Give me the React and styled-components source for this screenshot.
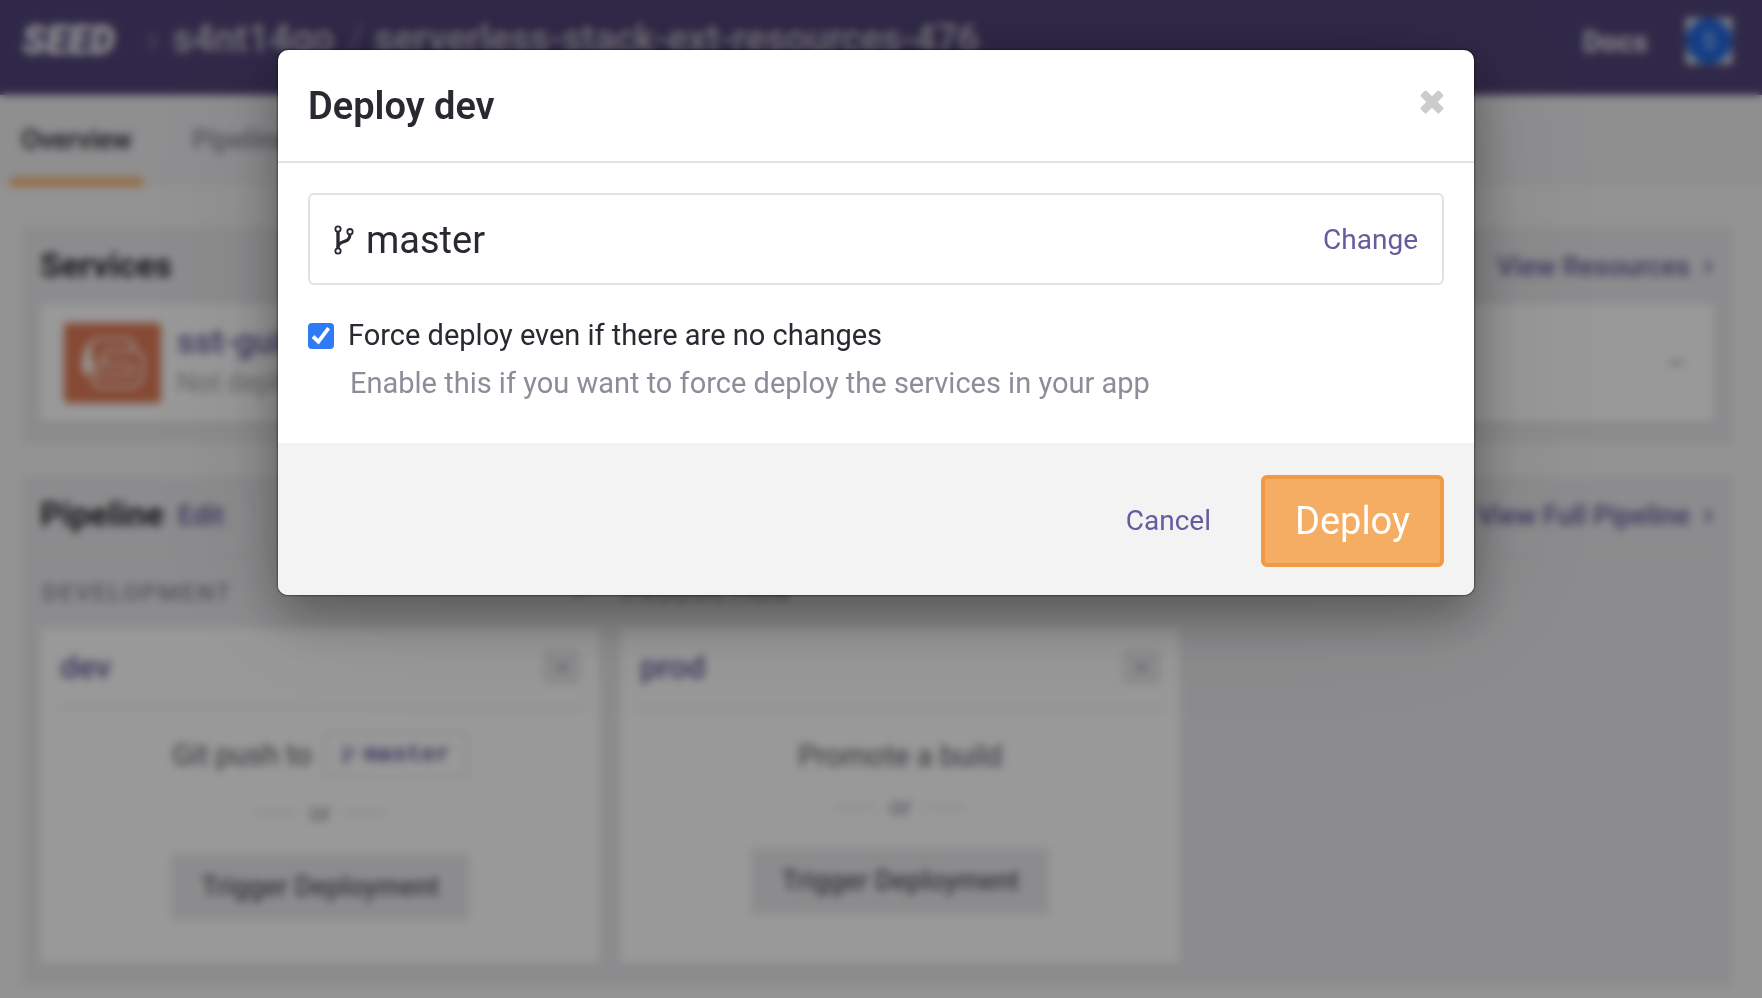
import React, { useState } from "react";
import styled, { createGlobalStyle, css } from "styled-components";

const color = {
  ink: "#2a2830",
  muted: "#8f8c99",
  grey: "#5f5d68",
  purple: "#675a9e",
  header: "#504478",
  page: "#f5f5f5",
  panel: "#eaeaed",
  line: "#e2e2e2",
  orange: "#f5ad63",
  orangeDark: "#f09a45",
};

const GlobalStyle = createGlobalStyle`
  *, *::before, *::after { box-sizing: border-box; }
  html, body { margin: 0; background: ${color.page}; }
  body {
    font-family: Roboto, "Liberation Sans", sans-serif;
    font-size: 29px;
    color: ${color.ink};
  }
  a { color: inherit; text-decoration: none; }
  h1, h2, h3, p { margin: 0; font-weight: 500; }
  button { font: inherit; color: inherit; border: 0; cursor: pointer; }
`;

/* ---------- page ---------- */

const Page = styled.div`
  min-height: 100vh;
  background: ${color.page};
`;

const TopBar = styled.header`
  display: flex;
  align-items: center;
  height: 95px;
  padding: 0 30px 14px 22px;
  background: ${color.header};
  color: #c9c7d0;
`;

const Logo = styled.a`
  font-size: 40px;
  line-height: 44px;
  font-weight: 900;
  font-style: italic;
  color: #f4f4f6;
`;

const Crumbs = styled.nav`
  display: flex;
  align-items: center;
  flex: 1;
  gap: 14px;
  margin-left: 32px;
  padding-bottom: 4px;
  font-size: 38px;
  line-height: 44px;
  font-weight: 500;
`;

const CrumbMark = styled.span`
  width: 12px;
  color: #8a80ab;
  font-weight: 400;
`;

const DocsLink = styled.a`
  margin-right: 38px;
  padding-top: 2px;
  font-weight: 700;
  color: #e4e3e8;
`;

const Avatar = styled.span`
  display: grid;
  width: 46px;
  height: 46px;
  background: #e8e8ea;
`;

const AvatarDisc = styled.span`
  display: grid;
  place-items: center;
  border-radius: 50%;
  background: #1f66dc;
  color: #bdd4ff;
  font-size: 24px;
`;

const Tabs = styled.nav`
  display: flex;
  gap: 38px;
  height: 91px;
  padding: 0 10px;
  background: #eeeef1;
`;

const Tab = styled.a`
  display: flex;
  align-items: center;
  padding: 6px 11px 0;
  border-bottom: 8px solid ${(p) => (p.$active ? color.orange : "transparent")};
  font-size: 27px;
  font-weight: 500;
  color: ${(p) => (p.$active ? color.ink : color.muted)};
`;

const Content = styled.main`
  display: flex;
  flex-direction: column;
  gap: 32px;
  padding: 41px 30px 12px 22px;
`;

const Panel = styled.section`
  padding: 18px 18px 22px;
  background: ${color.panel};
`;

const PanelHead = styled.div`
  display: flex;
  align-items: center;
  gap: 14px;
  height: 40px;
  margin-bottom: 19px;
`;

const PanelTitle = styled.h2`
  font-size: 34px;
  font-weight: 700;
`;

const PanelLink = styled.a`
  display: flex;
  align-items: center;
  gap: 12px;
  margin-left: ${(p) => (p.$end ? "auto" : "0")};
  padding-top: 4px;
  font-size: 27px;
  font-weight: 500;
  color: ${color.purple};
`;

const cardSurface = css`
  background: #ffffff;
  border-radius: 4px;
  box-shadow: 0 2px 4px rgba(0, 0, 0, 0.08);
`;

const ServiceCard = styled.article`
  ${cardSurface}
  display: flex;
  align-items: center;
  gap: 16px;
  height: 118px;
  padding: 0 28px 0 24px;
`;

const ServiceIcon = styled.span`
  display: grid;
  place-items: center;
  width: 97px;
  height: 80px;
  border-radius: 4px;
  background: #e07a56;
`;

const ServiceText = styled.div`
  flex: 1;
  padding-bottom: 4px;
`;

const ServiceName = styled.h3`
  font-size: 34px;
  line-height: 44px;
  color: ${color.purple};
`;

const ServiceStatus = styled.p`
  font-size: 27px;
  line-height: 40px;
  font-weight: 400;
  color: #aaa8b2;
`;

const Dash = styled.span`
  color: ${color.muted};
`;

const Rule = styled.hr`
  margin: 0;
  border: 0;
  border-top: 2px solid #e4e4e6;
`;

const Stages = styled.div`
  display: grid;
  grid-template-columns: 12fr 12fr 11fr;
  column-gap: 20px;
  padding-top: 20px;
`;

const Stage = styled.div`
  display: flex;
  flex-direction: column;
  gap: 17px;
`;

const StageLabel = styled.h3`
  display: flex;
  align-items: center;
  justify-content: space-between;
  padding: 0 16px 0 2px;
  font-size: 24px;
  line-height: 36px;
  letter-spacing: 2px;
  text-transform: uppercase;
  color: ${color.muted};
`;

const StageCard = styled.article`
  ${cardSurface}
  display: flex;
  flex-direction: column;
  height: 336px;
  padding: 0 20px;
`;

const StageHead = styled.div`
  display: flex;
  align-items: center;
  justify-content: space-between;
  height: 80px;
  border-bottom: 2px solid #e6e6e6;
  font-size: 32px;
  font-weight: 500;
  color: ${color.purple};
`;

const MenuButton = styled.button`
  display: grid;
  place-items: center;
  width: 37px;
  height: 34px;
  padding: 0;
  background: ${color.panel};
  color: ${color.muted};
`;

const StageBody = styled.div`
  display: flex;
  flex-direction: column;
  align-items: center;
  gap: 21px;
  padding-top: ${(p) => (p.$textOnly ? "32px" : "24px")};
`;

const StageAction = styled.p`
  display: flex;
  align-items: center;
  gap: 12px;
  font-weight: 400;
  line-height: 32px;
  color: ${color.grey};
`;

const BranchTag = styled.span`
  display: flex;
  align-items: center;
  gap: 8px;
  height: 46px;
  padding: 0 16px;
  border: 2px solid #e6e6e6;
  border-radius: 4px;
  font-family: "Liberation Mono", monospace;
  font-size: 24px;
  font-weight: 700;
  color: ${color.purple};
`;

const OrRow = styled.div`
  display: flex;
  align-items: center;
  gap: 14px;
  margin-bottom: 6px;
  font-size: 24px;
  line-height: 28px;
  color: ${color.muted};

  &::before,
  &::after {
    content: "";
    width: 42px;
    border-top: 2px solid #dcdcdc;
  }
`;

const TriggerButton = styled.button`
  width: 298px;
  height: 66px;
  padding: 0;
  background: ${color.panel};
  font-size: 27px;
  font-weight: 500;
  color: ${color.grey};
`;

/* ---------- dialog ---------- */

const Overlay = styled.div`
  position: fixed;
  inset: 0;
  display: flex;
  justify-content: center;
  align-items: flex-start;
  padding: 50px 288px 50px 278px;
  background: rgba(0, 0, 0, 0.4);
  backdrop-filter: blur(4px);
`;

const Modal = styled.section`
  flex: 1;
  overflow: hidden;
  border-radius: 10px;
  background: #ffffff;
  font-weight: 450;
  box-shadow:
    0 0 2px 1px rgba(0, 0, 0, 0.4),
    0 20px 50px rgba(0, 0, 0, 0.35),
    0 4px 160px rgba(0, 0, 0, 0.12);
`;

const ModalHead = styled.div`
  display: flex;
  align-items: center;
  justify-content: space-between;
  height: 113px;
  padding: 0 30px;
  border-bottom: 2px solid ${color.line};
`;

const ModalTitle = styled.h1`
  font-size: 38px;
  line-height: 44px;
  font-weight: 600;
`;

const CloseButton = styled.button`
  display: grid;
  padding: 0 0 8px;
  background: none;
`;

const ModalBody = styled.div`
  padding: 30px 30px 40px;
`;

const BranchBox = styled.div`
  display: flex;
  align-items: center;
  gap: 12px;
  height: 92px;
  padding: 2px 24px 0;
  border: 2px solid ${color.line};
  border-radius: 6px;
`;

const BranchName = styled.span`
  flex: 1;
  font-size: 38px;
`;

const TextButton = styled.button`
  padding: 0 0 2px;
  background: none;
  font-size: 28px;
  color: ${color.purple};
`;

const CheckRow = styled.label`
  display: flex;
  align-items: center;
  gap: 14px;
  margin-top: 30px;
  line-height: 40px;
`;

const CheckBox = styled.input`
  appearance: none;
  width: 26px;
  height: 26px;
  margin: 2px 0 0;
  border: 2px solid #9a9a9a;
  border-radius: 4px;
  background: #ffffff;

  &:checked {
    border: 0;
    background: #2f7bf6
      url("data:image/svg+xml,%3Csvg xmlns='http://www.w3.org/2000/svg' viewBox='0 0 26 26'%3E%3Cpath d='M5 13.5 10.4 18.6 20.6 5.2' fill='none' stroke='white' stroke-width='3.8'/%3E%3C/svg%3E");
  }
`;

const Hint = styled.p`
  padding: 8px 0 0 42px;
  line-height: 40px;
  font-weight: inherit;
  color: ${color.muted};
`;

const ModalFoot = styled.div`
  display: flex;
  align-items: center;
  justify-content: flex-end;
  gap: 50px;
  height: 152px;
  padding: 4px 30px 0;
  background: #f3f3f3;
`;

const DeployButton = styled.button`
  height: 92px;
  padding: 0 30px;
  border: 4px solid ${color.orangeDark};
  border-radius: 6px;
  background: ${color.orange};
  font-size: 38px;
  color: #ffffff;
`;

/* ---------- drawings ---------- */

function BranchIcon({ width, height }) {
  return (
    <svg width={width} height={height} viewBox="0 0 60 90" fill="none" stroke="currentColor" aria-hidden="true">
      <circle cx="12" cy="12" r="8" strokeWidth="5.5" />
      <circle cx="48" cy="20" r="8" strokeWidth="5.5" />
      <circle cx="12" cy="78" r="8" strokeWidth="5.5" />
      <path d="M12 21V69" strokeWidth="10" />
      <path d="M48 29C47 49 32 48 20 54Q13 58 12 66" strokeWidth="9.5" />
    </svg>
  );
}

function CloseIcon() {
  return (
    <svg width="24" height="24" viewBox="0 0 24 24" fill="#cccccc" aria-hidden="true">
      <rect x="-1" y="8" width="26" height="8" rx="1.6" transform="rotate(45 12 12)" />
      <rect x="-1" y="8" width="26" height="8" rx="1.6" transform="rotate(-45 12 12)" />
    </svg>
  );
}

function Chevron({ down }) {
  return (
    <svg width="12" height="16" viewBox="0 0 12 16" fill="none" stroke="currentColor" strokeWidth="2.5" aria-hidden="true">
      <path d={down ? "M1 5.5 6 11 11 5.5" : "M3 2 9 8 3 14"} />
    </svg>
  );
}

function StackLogo() {
  return (
    <svg width="66" height="54" viewBox="0 0 66 54" fill="none" stroke="#ffffff" strokeWidth="2.5" aria-hidden="true">
      <path d="M14 3H46Q54 3 54 9T47 15H30Q22 15 22 21T29 28H46Q53 28 53 33.500T46 39H16" />
      <path d="M14 2Q5 9 3 24Q1 33 6 40Q10 36 13 29Q8 14 14 2Z" fill="#ffffff" strokeWidth="1" />
      <path d="M50 15H55Q63 16 63 25V36Q61 51 51 51H20Q13 51 13 45V39Q14 28 24 28H30" />
    </svg>
  );
}

export default function App() {
  const [force, setForce] = useState(true);

  return (
    <>
      <GlobalStyle />
      <Page>
        <TopBar>
          <Logo href="#">SEED</Logo>
          <Crumbs aria-label="Breadcrumb">
            <CrumbMark>›</CrumbMark>
            <a href="#">s4nt14go</a>
            <CrumbMark>/</CrumbMark>
            <a href="#">serverless-stack-ext-resources-476</a>
          </Crumbs>
          <DocsLink href="#">Docs</DocsLink>
          <Avatar>
            <AvatarDisc>S</AvatarDisc>
          </Avatar>
        </TopBar>
        <Tabs aria-label="App">
          <Tab href="#" $active>Overview</Tab>
          <Tab href="#">Pipeline</Tab>
        </Tabs>
        <Content>
          <Panel>
            <PanelHead>
              <PanelTitle>Services</PanelTitle>
              <PanelLink href="#" $end>View Resources <Chevron /></PanelLink>
            </PanelHead>
            <ServiceCard>
              <ServiceIcon><StackLogo /></ServiceIcon>
              <ServiceText>
                <ServiceName><a href="#">sst-guide</a></ServiceName>
                <ServiceStatus>Not deployed</ServiceStatus>
              </ServiceText>
              <Dash>–</Dash>
            </ServiceCard>
          </Panel>
          <Panel>
            <PanelHead>
              <PanelTitle>Pipeline</PanelTitle>
              <PanelLink href="#">Edit</PanelLink>
              <PanelLink href="#" $end>View Full Pipeline <Chevron /></PanelLink>
            </PanelHead>
            <Rule />
            <Stages>
              <Stage>
                <StageLabel>Development <Chevron down /></StageLabel>
                <StageCard>
                  <StageHead>
                    <a href="#">dev</a>
                    <MenuButton aria-label="dev menu"><Chevron down /></MenuButton>
                  </StageHead>
                  <StageBody>
                    <StageAction>
                      Git push to
                      <BranchTag><BranchIcon width={14} height={20} />master</BranchTag>
                    </StageAction>
                    <OrRow>or</OrRow>
                    <TriggerButton>Trigger Deployment</TriggerButton>
                  </StageBody>
                </StageCard>
              </Stage>
              <Stage>
                <StageLabel>Production</StageLabel>
                <StageCard>
                  <StageHead>
                    <a href="#">prod</a>
                    <MenuButton aria-label="prod menu"><Chevron down /></MenuButton>
                  </StageHead>
                  <StageBody $textOnly>
                    <StageAction>Promote a build</StageAction>
                    <OrRow>or</OrRow>
                    <TriggerButton>Trigger Deployment</TriggerButton>
                  </StageBody>
                </StageCard>
              </Stage>
            </Stages>
          </Panel>
        </Content>
      </Page>

      <Overlay>
        <Modal role="dialog" aria-modal="true" aria-labelledby="deploy-title">
          <ModalHead>
            <ModalTitle id="deploy-title">Deploy dev</ModalTitle>
            <CloseButton aria-label="Close"><CloseIcon /></CloseButton>
          </ModalHead>
          <ModalBody>
            <BranchBox>
              <BranchIcon width={20} height={30} />
              <BranchName>master</BranchName>
              <TextButton>Change</TextButton>
            </BranchBox>
            <CheckRow>
              <CheckBox
                type="checkbox"
                checked={force}
                onChange={(e) => setForce(e.target.checked)}
                aria-describedby="force-hint"
              />
              Force deploy even if there are no changes
            </CheckRow>
            <Hint id="force-hint">Enable this if you want to force deploy the services in your app</Hint>
          </ModalBody>
          <ModalFoot>
            <TextButton>Cancel</TextButton>
            <DeployButton>Deploy</DeployButton>
          </ModalFoot>
        </Modal>
      </Overlay>
    </>
  );
}
